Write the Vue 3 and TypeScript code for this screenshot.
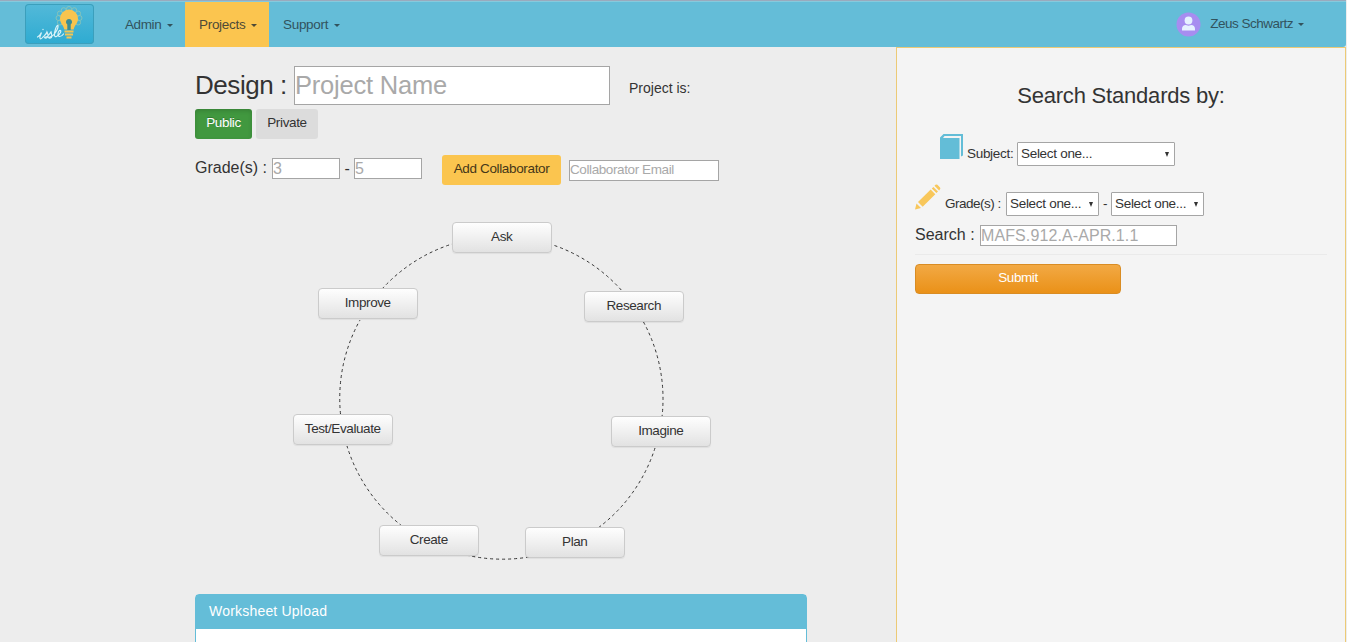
<script setup lang="ts">
interface Step {
  label: string
  x: number
  y: number
}

const steps: Step[] = [
  { label: 'Ask', x: 257, y: 0 },
  { label: 'Research', x: 389, y: 69 },
  { label: 'Imagine', x: 416, y: 194 },
  { label: 'Plan', x: 330, y: 305 },
  { label: 'Create', x: 184, y: 303 },
  { label: 'Test/Evaluate', x: 98, y: 192 },
  { label: 'Improve', x: 123, y: 66 },
]
const arcs: string[] = [
  'M359.5 23.5A161.5 161.5 0 0 1 428 70',
  'M448.500 100A161.5 161.5 0 0 1 467 195',
  'M460 226A161.5 161.5 0 0 1 403 306',
  'M334 335A161.5 161.5 0 0 1 271 333',
  'M207 304A161.5 161.5 0 0 1 152 224',
  'M145.500 192A161.5 161.5 0 0 1 165 98',
  'M187 67A161.5 161.5 0 0 1 257 22',
]
const petals = Array.from({ length: 9 }, (_, i) => {
  const a = ((150 + i * 30) * Math.PI) / 180
  return { x: 44 + 10.500 * Math.cos(a), y: 14 + 9 * Math.sin(a) }
})
</script>

<template>
  <div class="page">
    <header class="navbar">
      <a class="brand">
        <svg width="69" height="40" viewBox="0 0 69 40">
          <g fill="none" stroke="#9cc9b0" stroke-width="1" opacity=".75">
            <circle v-for="(p, i) in petals" :key="i" :cx="p.x" :cy="p.y" r="2.500" />
          </g>
          <path d="M44 5.500a9 9 0 0 1 9 9c0 5-3.500 6.500-4.300 11h-9.400c-.8-4.500-4.300-6-4.300-11a9 9 0 0 1 9-9z" fill="#f8c44f" />
          <path d="M44 15a3 3 0 0 1 1.700 5.500V26h-3.400v-5.500A3 3 0 0 1 44 15z" fill="#3a8c96" />
          <path d="M39.500 27.500h9M40 30.500h8M41.500 33.500h5" stroke="#f5c651" stroke-width="2" />
          <path d="M12.500 33c2-1 3-2.500 4-4.500l-1.500 4c-.5 3 1 3 3 .5 2-2 3.500-3 4-5 1 2 2 5-.5 6-2 .5-2.500-1-1-1 3 0 4-3.500 5.500-5 .5 2 2 5-.5 6-2 .5-2.500-1-1-1 5-.5 9-9 8.500-11.500-1.500-1-4 7-3.500 10 .5 2.500 3 .5 5-1.500 2-2.500 1.500-4 0-3.500-2 1.500-2 6 0 6 1.500 0 3-1 4-2.500" fill="none" stroke="#d9f3f8" stroke-width="1.200" stroke-linecap="round" />
          <circle cx="18" cy="25.500" r=".7" fill="#d9f3f8" />
        </svg>
      </a>
      <nav class="menu">
        <a class="item admin">Admin<i class="caret" /></a>
        <a class="item projects">Projects<i class="caret" /></a>
        <a class="item support">Support<i class="caret" /></a>
      </nav>
      <div class="user">
        <svg class="avatar" width="25" height="25" viewBox="0 0 25 25">
          <circle cx="12.500" cy="12.500" r="12" fill="#a78df0" />
          <circle cx="12.500" cy="8.500" r="3.900" fill="#e6f1ff" />
          <path d="M6 18.500v-1.800c0-2.100 1.600-3.700 3.700-3.700l2.800.7 2.800-.7c2.100 0 3.700 1.600 3.700 3.700v1.800z" fill="#e6f1ff" />
        </svg>
        <span class="username">Zeus Schwartz</span><i class="caret" />
      </div>
    </header>

    <div class="body">
      <main class="main">
        <div class="title-row">
          <h1>Design :</h1>
          <input class="name" placeholder="Project Name" />
          <span class="project-is">Project is:</span>
        </div>
        <div class="toggle">
          <button class="btn public">Public</button>
          <button class="btn private">Private</button>
        </div>
        <div class="grades">
          <label>Grade(s) :</label>
          <input class="grade" placeholder="3" />
          <span class="dash">-</span>
          <input class="grade" placeholder="5" />
          <button class="btn add">Add Collaborator</button>
          <input class="email" placeholder="Collaborator Email" />
        </div>
        <section class="cycle">
          <svg class="ring" width="612" height="345" viewBox="0 0 612 345">
            <path v-for="d in arcs" :key="d" :d="d" />
          </svg>
          <button
            v-for="s in steps"
            :key="s.label"
            class="step"
            :style="{ left: s.x + 'px', top: s.y + 'px' }"
          >{{ s.label }}</button>
        </section>
        <section class="panel">
          <h3>Worksheet Upload</h3>
          <div class="panel-body" />
        </section>
      </main>

      <aside class="side">
        <h2>Search Standards by:</h2>
        <div class="subject-row">
          <svg class="book" width="24" height="26" viewBox="0 0 24 26">
            <path d="M0 3.500 3.500 0H23V21.500L21 22.500V2H4.500L3 4H19.500V25H0z" fill="#63bdd7" />
          </svg>
          <label class="subject">Subject:</label>
          <div class="select wide"><span>Select one...</span><i /></div>
        </div>
        <div class="grade-row">
          <svg class="pencil" width="27" height="27" viewBox="0 0 27 27">
            <path d="M0 25.500 1.500 19.500 6 24zM3 18 15.700 5.600 20.300 10.200 7.700 22.700zM16.800 4.500 18.400 2.900 23 7.500 21.400 9.100zM19.500 1.800 20.500.8Q21.500 0 22.400.8L25 3.400Q25.800 4.300 25 5.200L24.100 6.400z" fill="#f8c75b" />
          </svg>
          <label class="grade-label">Grade(s) :</label>
          <div class="select"><span>Select one...</span><i /></div>
          <span class="sep">-</span>
          <div class="select"><span>Select one...</span><i /></div>
        </div>
        <div class="search-row">
          <label>Search :</label>
          <input placeholder="MAFS.912.A-APR.1.1" />
        </div>
        <hr />
        <button class="submit">Submit</button>
      </aside>
    </div>
  </div>
</template>

<style>
body {
  margin: 0;
  overflow: hidden;
}
</style>

<style scoped>
.page {
  box-sizing: border-box;
  width: 1347px;
  height: 642px;
  overflow: hidden;
  background: #ededed;
  color: #333;
  font: 13.500px/20px "Liberation Sans", Arial, sans-serif;
  letter-spacing: -0.3px;
}
.page * {
  box-sizing: border-box;
}
.navbar {
  display: flex;
  height: 47px;
  width: 1346px;
  background: #64bdd8;
  border-top: 1px solid #9aaabd;
  border-radius: 0 0 3px 0;
  box-shadow: inset 0 1px #86cadd;
  color: #32535d;
}
.brand {
  width: 69px;
  height: 40px;
  margin: 3px 0 0 25px;
  border-radius: 4px;
  background: linear-gradient(#53b9d9, #2eabd1);
  box-shadow: inset 0 0 0 1px #3b9fbc;
}
.brand svg {
  display: block;
}
.menu {
  display: flex;
  margin-left: 17px;
}
.item {
  display: flex;
  align-items: center;
  height: 46px;
  padding: 1px 0 0 14px;
}
.admin {
  width: 74px;
  letter-spacing: -0.4px;
}
.projects {
  width: 84px;
  margin-top: 1px;
  height: 45px;
  padding-top: 0;
  background: #fbc54f;
  color: #4d4a37;
}
.caret {
  width: 0;
  height: 0;
  margin: 2px 0 0 6px;
  border: 3px solid transparent;
  border-top-color: currentColor;
  border-bottom: 0;
}
.user {
  display: flex;
  align-items: center;
  height: 45px;
  margin-left: auto;
  padding-right: 42px;
}
.user .caret {
  margin-left: 5px;
}
.username {
  letter-spacing: -0.5px;
}
.avatar {
  margin: 2px 9px 0 0;
}
.body {
  display: flex;
  height: 595px;
}
.main {
  width: 896px;
  padding: 19px 0 0 195px;
}
input {
  display: block;
  margin: 0;
  padding: 0 1px;
  border: 1px solid #a5a5a5;
  border-radius: 0;
  background: #fff;
  font-family: inherit;
  outline: 0;
}
input::placeholder {
  color: #a9a9a9;
  opacity: 1;
}
.title-row {
  display: flex;
  height: 39px;
}
h1 {
  width: 99px;
  margin: 0;
  font: 26px/38px "Liberation Sans", Arial, sans-serif;
  letter-spacing: -0.450px;
}
.name {
  width: 316px;
  height: 39px;
  padding: 0;
  font-size: 25.500px;
  letter-spacing: -0.2px;
}
.project-is {
  margin-left: 19px;
  font-size: 14px;
  line-height: 44px;
  letter-spacing: 0;
}
.toggle {
  display: flex;
  gap: 4px;
  margin-top: 4px;
}
.btn {
  height: 30px;
  padding: 0 0 3px;
  border: 0;
  border-radius: 3px;
  font: 13.500px/26px "Liberation Sans", Arial, sans-serif;
  letter-spacing: -0.350px;
}
.public {
  width: 57px;
  background: #41983f;
  box-shadow: inset 0 2px 4px rgba(0, 0, 0, 0.15);
  color: #fff;
  text-shadow: 0 -1px rgba(0, 0, 0, 0.2);
}
.private {
  width: 62px;
  background: #dcdcdc;
  color: #333;
}
.grades {
  display: flex;
  height: 30px;
  margin-top: 16px;
}
.grades label {
  width: 77px;
  font-size: 16px;
  line-height: 26px;
  letter-spacing: 0;
}
.grade {
  width: 68px;
  height: 21px;
  margin-top: 3px;
  padding: 0;
  font-size: 16px;
}
.dash {
  width: 14px;
  text-align: center;
  font-size: 16px;
  line-height: 28px;
}
.add {
  width: 119px;
  margin-left: 20px;
  background: #fbc54f;
  color: #453719;
}
.email {
  width: 150px;
  height: 21px;
  margin: 5px 0 0 8px;
  padding: 0 0 2px;
  font-size: 13.500px;
  letter-spacing: -0.4px;
}
.cycle {
  position: relative;
  width: 612px;
  height: 345px;
  margin-top: 37px;
}
.ring {
  display: block;
  margin-left: -0.500px;
  fill: none;
  stroke: #333;
  stroke-width: 1;
  stroke-dasharray: 3 3;
}
.step {
  position: absolute;
  width: 99.500px;
  height: 31px;
  padding: 0 0 1px;
  border: 1px solid #cbcbcb;
  border-radius: 4px;
  background: linear-gradient(#fefefe, #e2e2e2);
  box-shadow: 0 1px 1px rgba(0, 0, 0, 0.06);
  color: #333;
  font: 13.500px/20px "Liberation Sans", Arial, sans-serif;
  letter-spacing: -0.4px;
}
.panel {
  width: 612px;
  margin-top: 27px;
  border: 1px solid #64bdd8;
  border-radius: 4px 4px 0 0;
  background: #fff;
}
.panel h3 {
  height: 34px;
  margin: 0;
  padding-left: 13px;
  background: #64bdd8;
  color: #fff;
  font: 14px/32px "Liberation Sans", Arial, sans-serif;
  letter-spacing: 0.2px;
}
.panel-body {
  height: 40px;
}
.side {
  width: 450px;
  padding: 35px 18px 0;
  border: 1px solid #ecca76;
  border-bottom: 0;
  background: #f4f4f4;
}
h2 {
  margin: 0;
  font: 22px/25px "Liberation Sans", Arial, sans-serif;
  letter-spacing: -0.2px;
  text-align: center;
}
.subject-row {
  display: flex;
  height: 33px;
  margin: 26px 0 0 25px;
}
.book {
  margin-right: 3px;
}
.subject {
  width: 50px;
  line-height: 40px;
}
.select {
  display: flex;
  align-items: center;
  width: 93px;
  height: 24px;
  padding: 0 5px 0 3px;
  border: 1px solid #a5a5a5;
  border-radius: 1px;
  background: #fff;
  white-space: nowrap;
}
.select i {
  margin-left: auto;
  border: 2.500px solid transparent;
  border-top: 5px solid #333;
  border-bottom: 0;
}
.select.wide {
  width: 158px;
  margin-top: 8px;
}
.grade-row {
  display: flex;
  height: 33px;
  margin-top: 17px;
}
.grade-row .select {
  margin-top: 8px;
}
.pencil {
  margin-right: 3px;
}
.grade-label {
  width: 61px;
  line-height: 40px;
  letter-spacing: -0.5px;
}
.sep {
  width: 12px;
  text-align: center;
  line-height: 40px;
}
.search-row {
  display: flex;
  height: 22px;
  margin-top: 8px;
}
.search-row label {
  width: 65px;
  font-size: 16px;
  line-height: 20px;
  letter-spacing: 0;
}
.search-row input {
  width: 197px;
  height: 21px;
  margin-top: 0;
  padding: 0;
  font-size: 16px;
  letter-spacing: 0.1px;
}
hr {
  height: 1px;
  margin: 7px 0 9px;
  border: 0;
  background: #eaeaea;
}
.submit {
  display: block;
  width: 206px;
  height: 30px;
  padding: 0 0 3px;
  border: 1px solid #d98c23;
  border-radius: 4px;
  background: linear-gradient(#f2a944, #ea9118);
  color: #fff;
  font: 13.500px/20px "Liberation Sans", Arial, sans-serif;
  letter-spacing: -0.4px;
}
</style>
